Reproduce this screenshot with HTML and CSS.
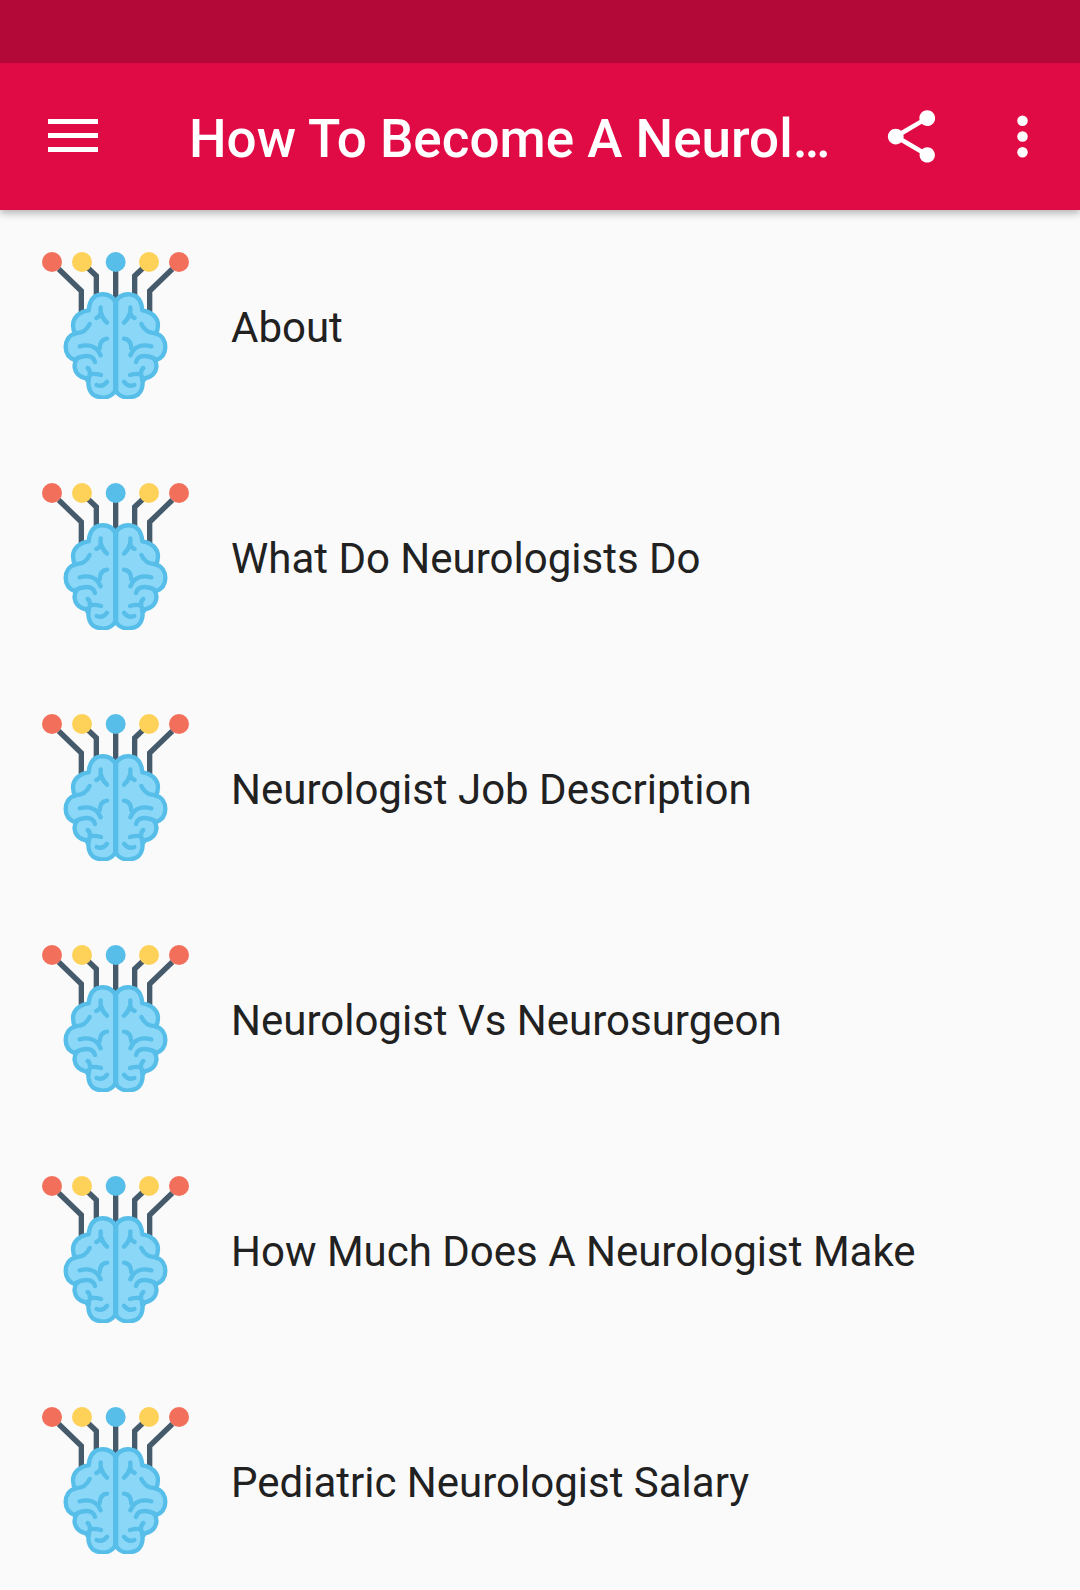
FILE: index.html
```html
<!DOCTYPE html>
<html lang="en">
<head>
<meta charset="utf-8">
<meta name="viewport" content="width=device-width, initial-scale=1">
<title>How To Become A Neurologist</title>
<link rel="stylesheet" href="styles.css">
</head>
<body>
<svg class="sprite" aria-hidden="true">
  <defs>
    <g id="brain-half">
      <path class="wire" d="M86 87L154 153V216M174 84L199 108V170"/>
      <circle class="red" cx="66" cy="66" r="30"/>
      <circle class="yellow" cx="156" cy="66" r="30"/>
      <path class="lobe" d="M257 186C247 168 230 161 212 163C190 166 178 185 176 211C150 214 129 232 129 256C129 266 131 274 136 281C117 285 107 302 107 321C107 343 120 356 138 362C130 374 134 391 142 401C150 411 163 415 177 417C171 440 181 463 200 469C224 477 246 470 257 450Z"/>
      <path class="fold" d="M212 202V220Q209 230 199 234M213 219Q219 238 231 248M179 252C172 266 162 281 135 279M149 319C176 312 201 318 212 346M209 325Q210 298 231 296M134 360C150 348 188 338 195 366M173 384Q180 388 180 402Q199 400 213 405M172 421Q175 406 188 402M200 435Q219 442 231 425"/>
    </g>
    <symbol id="brain" viewBox="36 36 441 441">
      <path class="wire" d="M257 90V190"/>
      <use href="#brain-half"/>
      <use href="#brain-half" transform="translate(513 0) scale(-1 1)"/>
      <path class="divide" d="M257 180V456"/>
      <circle class="blue" cx="257" cy="66" r="30"/>
    </symbol>
  </defs>
</svg>
<header class="header">
  <div class="status-bar"></div>
  <div class="toolbar">
    <button class="icon-button menu" type="button" aria-label="Open menu">
      <svg class="icon" viewBox="0 0 63 63"><path d="M6 14h50v5H6zM6 28h50v5H6zM6 42h50v5H6z"/></svg>
    </button>
    <h1 class="title">How To Become A Neurol…</h1>
    <button class="icon-button share" type="button" aria-label="Share">
      <svg class="icon" viewBox="0 0 24 24"><path d="M18 16.08c-.76 0-1.44.3-1.96.77L8.91 12.7c.05-.23.09-.46.09-.7s-.04-.47-.09-.7l7.05-4.11c.54.5 1.25.81 2.04.81 1.66 0 3-1.34 3-3s-1.34-3-3-3-3 1.34-3 3c0 .24.04.47.09.7L8.04 9.81C7.5 9.31 6.79 9 6 9c-1.66 0-3 1.34-3 3s1.34 3 3 3c.79 0 1.5-.31 2.04-.81l7.12 4.16c-.05.21-.08.43-.08.65 0 1.61 1.31 2.92 2.92 2.92s2.92-1.31 2.92-2.92-1.31-2.92-2.92-2.92z"/></svg>
    </button>
    <button class="icon-button more" type="button" aria-label="More options">
      <svg class="icon" viewBox="0 0 24 24"><circle cx="12" cy="6" r="2"/><circle cx="12" cy="12" r="2"/><circle cx="12" cy="18" r="2"/></svg>
    </button>
  </div>
</header>
<main>
  <ul class="topics">
    <li><a class="topic" href="#about"><svg class="thumb" aria-hidden="true"><use href="#brain"/></svg><span class="label">About</span></a></li>
    <li><a class="topic" href="#what"><svg class="thumb" aria-hidden="true"><use href="#brain"/></svg><span class="label">What Do Neurologists Do</span></a></li>
    <li><a class="topic" href="#job"><svg class="thumb" aria-hidden="true"><use href="#brain"/></svg><span class="label">Neurologist Job Description</span></a></li>
    <li><a class="topic" href="#versus"><svg class="thumb" aria-hidden="true"><use href="#brain"/></svg><span class="label">Neurologist Vs Neurosurgeon</span></a></li>
    <li><a class="topic" href="#pay"><svg class="thumb" aria-hidden="true"><use href="#brain"/></svg><span class="label">How Much Does A Neurologist Make</span></a></li>
    <li><a class="topic" href="#pediatric"><svg class="thumb" aria-hidden="true"><use href="#brain"/></svg><span class="label">Pediatric Neurologist Salary</span></a></li>
  </ul>
</main>
</body>
</html>
```
FILE: styles.css
```css
* { box-sizing: border-box; }

body {
  margin: 0;
  background: #fafafa;
  color: #212121;
  font-family: Roboto, "Liberation Sans", sans-serif;
}

.sprite { display: block; width: 0; height: 0; }

.header {
  background: #e00b45;
  color: #fff;
  box-shadow: 0 3px 8px rgba(0, 0, 0, 0.3);
}

.status-bar { height: 63px; background: #b30938; }

.toolbar { display: flex; align-items: center; height: 147px; }

.icon-button {
  flex: none;
  display: flex;
  padding: 0;
  border: 0;
  background: none;
  color: inherit;
  cursor: pointer;
}

.menu { padding: 0 42px; }
.share { padding: 0 32px; }
.more { padding: 0 26px 0 16px; }

.icon { width: 63px; height: 63px; fill: currentColor; }

.title {
  flex: 1;
  min-width: 0;
  margin: 0 0 0 42px;
  padding-top: 4px;
  font-size: 53px;
  line-height: 64px;
  font-weight: 500;
  white-space: nowrap;
  overflow: hidden;
  text-overflow: ellipsis;
}

.topics { margin: 0; padding: 0; list-style: none; }

.topic {
  display: flex;
  align-items: center;
  gap: 42px;
  padding: 42px;
  color: inherit;
  font-size: 42px;
  line-height: 50px;
  text-decoration: none;
}

.label { padding-top: 4px; }

.thumb { flex: none; width: 147px; height: 147px; }

.wire { fill: none; stroke: #455a6b; stroke-width: 16; }
.lobe { fill: #8ad7f8; stroke: #56bee8; stroke-width: 13; stroke-linejoin: round; }
.fold { fill: none; stroke: #56bee8; stroke-width: 13; stroke-linecap: round; stroke-linejoin: round; }
.divide { fill: none; stroke: #56bee8; stroke-width: 16; }
.red { fill: #f2705b; }
.yellow { fill: #fed159; }
.blue { fill: #56bee8; }
```
